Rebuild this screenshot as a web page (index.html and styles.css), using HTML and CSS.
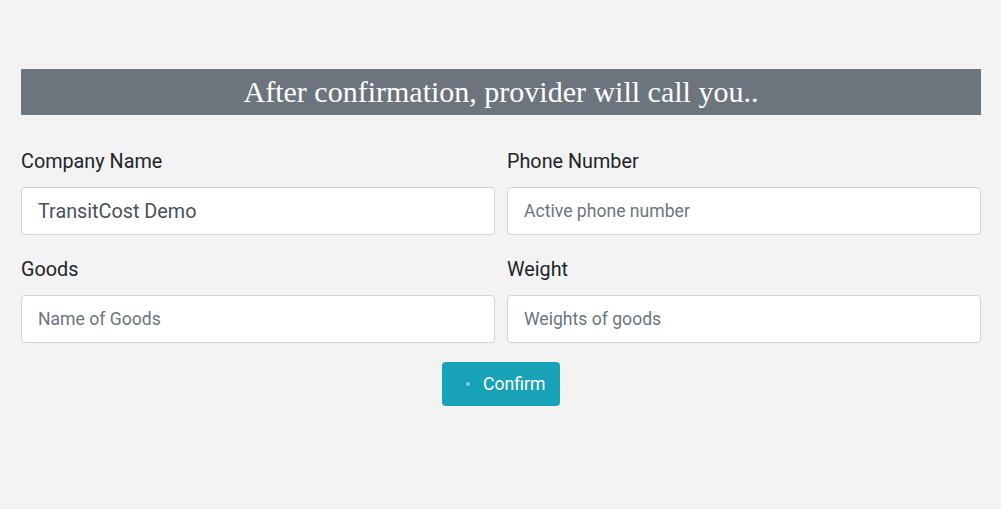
FILE: index.html
```html
<!DOCTYPE html>
<html>
<head>
<meta charset="utf-8">
<link rel="stylesheet" href="styles.css">
</head>
<body>
<div class="wrap">
  <div class="banner">After confirmation, provider will call you..</div>
  <form class="form">
    <div class="grid">
      <div class="field">
        <label class="label">Company Name</label>
        <input class="input filled" type="text" value="TransitCost Demo">
      </div>
      <div class="field">
        <label class="label">Phone Number</label>
        <input class="input" type="text" placeholder="Active phone number">
      </div>
      <div class="field">
        <label class="label">Goods</label>
        <input class="input" type="text" placeholder="Name of Goods">
      </div>
      <div class="field">
        <label class="label">Weight</label>
        <input class="input" type="text" placeholder="Weights of goods">
      </div>
    </div>
    <div class="actions">
      <button type="button" class="btn"><span class="dot"></span>Confirm</button>
    </div>
  </form>
</div>
</body>
</html>
```
FILE: styles.css
```css
html, body {
  margin: 0;
  padding: 0;
  background: #f3f3f3;
}
.wrap {
  padding: 69px 20px 0 21px;
}
.banner {
  height: 46px;
  background: #6c757d;
  color: #fff;
  font-family: "Liberation Serif", serif;
  font-size: 30px;
  line-height: 46px;
  text-align: center;
}
.form {
  margin-top: 33px;
}
.grid {
  display: grid;
  grid-template-columns: 474px 1fr;
  column-gap: 12px;
  row-gap: 21px;
}
.field {
  display: flex;
  flex-direction: column;
}
.label {
  font-family: Roboto, sans-serif;
  font-size: 19.8px;
  line-height: 28px;
  color: #212529;
  margin-bottom: 11px;
}
.input {
  box-sizing: border-box;
  height: 48px;
  width: 100%;
  border: 1px solid #ced4da;
  border-radius: 4px;
  background: #fff;
  padding: 0 16px;
  font-family: Roboto, sans-serif;
  font-size: 17.6px;
  color: #495057;
  outline: none;
}
.input.filled {
  font-size: 19.8px;
}
.input::placeholder {
  color: #6c757d;
  opacity: 1;
}
.actions {
  display: flex;
  justify-content: center;
  margin-top: 19px;
}
.btn {
  display: flex;
  align-items: center;
  box-sizing: border-box;
  width: 118px;
  height: 44px;
  padding: 0 0 0 24px;
  border: none;
  border-radius: 4px;
  background: #17a2b8;
  color: #fff;
  font-family: Roboto, sans-serif;
  font-size: 17.6px;
}
.dot {
  width: 4px;
  height: 4px;
  border-radius: 50%;
  background: #7ccfdc;
  margin-right: 13px;
}
```
